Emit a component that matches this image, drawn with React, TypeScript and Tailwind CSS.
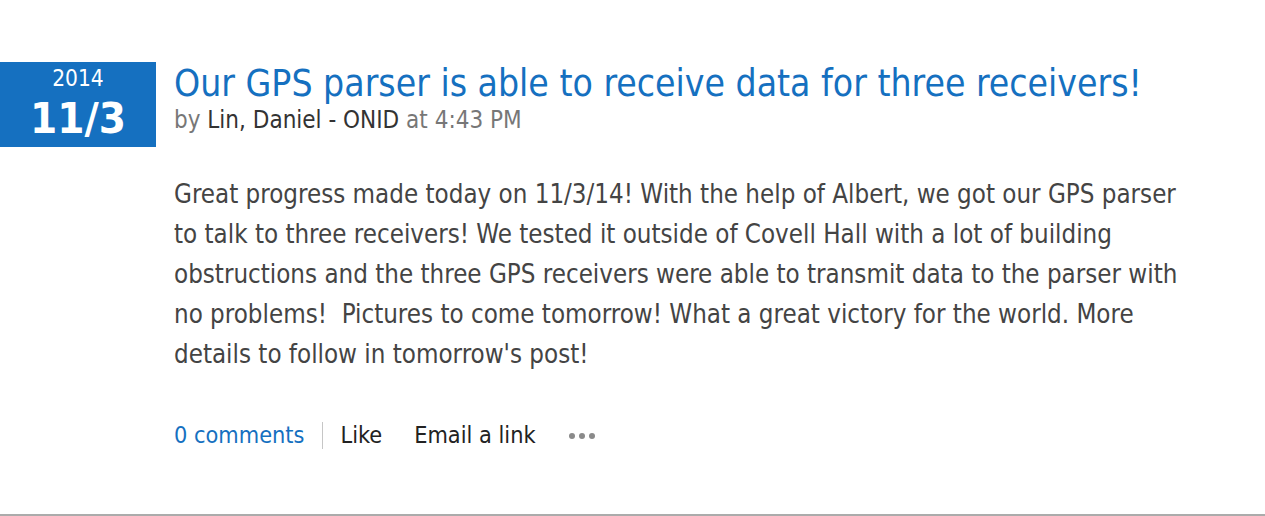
export default function App() {
  const font = { fontFamily: "Tahoma, 'DejaVu Sans Condensed', 'DejaVu Sans', sans-serif" };
  const lines = [
    "Great progress made today on 11/3/14! With the help of Albert, we got our GPS parser",
    "to talk to three receivers! We tested it outside of Covell Hall with a lot of building",
    "obstructions and the three GPS receivers were able to transmit data to the parser with",
    "no problems!\u00a0 Pictures to come tomorrow! What a great victory for the world. More",
    "details to follow in tomorrow's post!",
  ];
  return (
    <div className="w-[1265px] h-[516px] bg-white relative overflow-hidden" style={font}>
      <div className="flex pt-[62px]">
        <div className="w-[156px] h-[85px] bg-[#1570c0] text-white flex flex-col items-center shrink-0">
          <div className="text-[22.5px] leading-none mt-[5px]">2014</div>
          <div className="text-[43.5px] font-bold leading-none mt-[7px]">11/3</div>
        </div>
        <div className="pl-[18px]">
          <h1 className="text-[37px] leading-[44px] text-[#1570c0] whitespace-nowrap">
            Our GPS parser is able to receive data for three receivers!
          </h1>
          <div className="text-[24px] leading-[28px] text-[#777]">
            by <span className="text-[#333]">Lin, Daniel - ONID</span> at 4:43 PM
          </div>
          <p className="text-[25.7px] leading-[40px] text-[#444] mt-[40px] whitespace-nowrap">
            {lines.map((l, i) => (
              <span key={i} className="block">
                {l}
              </span>
            ))}
          </p>
          <div className="flex items-center mt-[47px] text-[23.3px] leading-[28px]">
            <span className="text-[#1570c0]">0 comments</span>
            <span className="w-px h-[27px] bg-[#c6c6c6] ml-[17px] mr-[18px]" />
            <span className="text-[#222]">Like</span>
            <span className="text-[#222] ml-[32px]">Email a link</span>
            <span className="ml-[33px] flex gap-[4px] pt-[2px]">
              <span className="w-[6px] h-[6px] rounded-full bg-[#8a8a8a]" />
              <span className="w-[6px] h-[6px] rounded-full bg-[#8a8a8a]" />
              <span className="w-[6px] h-[6px] rounded-full bg-[#8a8a8a]" />
            </span>
          </div>
        </div>
      </div>
      <div className="absolute left-0 right-0 bottom-0 h-[2px] bg-[#ababab]" />
    </div>
  );
}
